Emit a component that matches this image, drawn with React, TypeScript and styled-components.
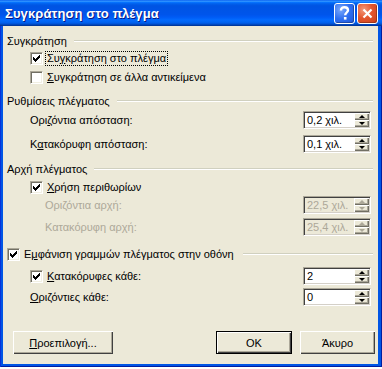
import React from 'react';
import styled, { createGlobalStyle } from 'styled-components';

const Global = createGlobalStyle`
  html, body { margin: 0; padding: 0; background: #ffffff; }
  body { font-family: "Liberation Sans", Arial, sans-serif; }
  #root { width: 382px; }
`;

const Window = styled.div`
  width: 382px;
  height: 367px;
  box-sizing: border-box;
  display: flex;
  flex-direction: column;
  background: #0055e5;
  padding: 0 4px 3px 3px;
  box-shadow: inset 1px 0 0 #0831d9, inset -1px 0 0 #001ea0, inset 0 -1px 0 #001ea0;
`;

const TitleBar = styled.div`
  height: 26px;
  margin: 0 -4px 0 -3px;
  padding: 0 4px 0 5px;
  display: flex;
  align-items: center;
  background: linear-gradient(to bottom, #0058ee 0%, #3593ff 4%, #288eff 6%, #127dff 8%, #036ffc 10%, #0262ee 14%, #0057e5 20%, #0054e3 24%, #0055eb 56%, #005bf5 66%, #026afe 76%, #0062ef 86%, #0052d6 92%, #0040ab 96%, #003092 100%);
`;

const TitleText = styled.div`
  flex: 1;
  color: #ffffff;
  font: bold 13px "Liberation Sans", Arial, sans-serif;
  text-shadow: 1px 1px 0 #0a1883;
  letter-spacing: 0.1px;
`;

const TitleButton = styled.div<{ $kind: 'help' | 'close' }>`
  width: 21px;
  height: 21px;
  box-sizing: border-box;
  margin-left: 2px;
  border: 1px solid #ffffff;
  border-radius: 3px;
  display: flex;
  align-items: center;
  justify-content: center;
  background: ${(p) =>
    p.$kind === 'close'
      ? 'radial-gradient(circle at 30% 30%, #f29a7c 0%, #e4562e 45%, #c8401b 100%)'
      : 'radial-gradient(circle at 30% 30%, #7aa8fb 0%, #2e6ef0 50%, #1f56d6 100%)'};
  box-shadow: inset -1px -1px 0 rgba(0, 0, 0, 0.25);
`;

const Body = styled.div`
  flex: 1;
  background: #ece9d8;
  display: flex;
  flex-direction: column;
  padding: 7px 5px 0 4px;
  font-size: 11px;
  color: #000000;
`;

const GroupHeader = styled.div<{ $mt: number }>`
  height: 16px;
  margin-top: ${(p) => p.$mt}px;
  display: flex;
  align-items: center;
`;

const Rule = styled.div`
  flex: 1;
  margin-left: 7px;
  height: 0;
  border-top: 1px solid #d0d0bf;
  border-bottom: 1px solid #ffffff;
`;

const CheckRow = styled.div<{ $mt: number; $indent: number }>`
  height: 16px;
  margin-top: ${(p) => p.$mt}px;
  padding-left: ${(p) => p.$indent}px;
  display: flex;
  align-items: center;
`;

const Box = styled.div`
  width: 13px;
  height: 13px;
  box-sizing: border-box;
  background: #ffffff;
  border-top: 1px solid #aca899;
  border-left: 1px solid #aca899;
  border-right: 1px solid #ffffff;
  border-bottom: 1px solid #ffffff;
  box-shadow: inset 1px 1px 0 #716f64, inset -1px -1px 0 #f1efe2;
  display: flex;
  align-items: center;
  justify-content: center;
  flex: none;
`;

const Label = styled.span<{ $disabled?: boolean; $focus?: boolean }>`
  color: ${(p) => (p.$disabled ? '#aca899' : '#000000')};
  white-space: nowrap;
  line-height: 13px;
  padding: 0 1px;
  border: 1px ${(p) => (p.$focus ? 'dotted #000000' : 'solid transparent')};
`;

const GroupLabel = styled.span`
  white-space: nowrap;
  line-height: 13px;
`;

const CheckLabel = styled(Label)`
  margin-left: 2px;
`;

const Acc = styled.span`
  text-decoration: underline;
`;

const FieldRow = styled.div<{ $mt: number; $indent: number }>`
  height: 18px;
  margin-top: ${(p) => p.$mt}px;
  padding-left: ${(p) => p.$indent}px;
  padding-right: 2px;
  display: flex;
  align-items: center;
`;

const FieldLabel = styled(Label)`
  flex: 1;
  padding: 0;
  border: none;
`;

const Spin = styled.div<{ $disabled?: boolean }>`
  width: 68px;
  height: 18px;
  box-sizing: border-box;
  display: flex;
  background: ${(p) => (p.$disabled ? '#ece9d8' : '#ffffff')};
  border-top: 1px solid #aca899;
  border-left: 1px solid #aca899;
  border-right: 1px solid #ffffff;
  border-bottom: 1px solid #ffffff;
  box-shadow: inset 1px 1px 0 #404040, inset -1px -1px 0 #d4d0c8;
  padding: 1px;
`;

const SpinValue = styled.div<{ $disabled?: boolean }>`
  flex: 1;
  padding-left: 2px;
  line-height: 14px;
  color: ${(p) => (p.$disabled ? '#aca899' : '#000000')};
  white-space: nowrap;
`;

const SpinButtons = styled.div`
  width: 15px;
  display: flex;
  flex-direction: column;
`;

const SpinBtn = styled.div`
  flex: 1;
  background: #ece9d8;
  box-shadow: inset 1px 1px 0 #ffffff, inset -1px -1px 0 #716f64, inset -2px -2px 0 #aca899;
  display: flex;
  align-items: center;
  justify-content: center;
`;

const Arrow = styled.div<{ $up?: boolean; $disabled?: boolean }>`
  width: 0;
  height: 0;
  border-left: 3px solid transparent;
  border-right: 3px solid transparent;
  ${(p) =>
    p.$up
      ? `border-bottom: 3px solid ${p.$disabled ? '#aca899' : '#000'};`
      : `border-top: 3px solid ${p.$disabled ? '#aca899' : '#000'};`}
`;

const ButtonRow = styled.div`
  margin-top: 25px;
  display: flex;
  align-items: center;
  justify-content: space-between;
  padding-left: 6px;
  margin-right: -2px;
`;

const ButtonGroup = styled.div`
  display: flex;
  align-items: center;
  gap: 8px;
`;

const PushButton = styled.div<{ $w: number; $default?: boolean }>`
  width: ${(p) => p.$w}px;
  flex: none;
  height: 23px;
  box-sizing: border-box;
  display: flex;
  align-items: center;
  justify-content: center;
  background: #ece9d8;
  border: ${(p) => (p.$default ? '1px solid #000000' : 'none')};
  box-shadow: inset 1px 1px 0 #ffffff, inset -1px -1px 0 #404040, inset -2px -2px 0 #aca899;
  white-space: nowrap;
`;

const Check = () => (
  <svg width="7" height="7" viewBox="0 0 7 7" shapeRendering="crispEdges">
    <path
      d="M6 0h1v1H6zM5 1h2v1H5zM0 2h1v1H0zM4 2h3v1H4zM0 3h2v1H0zM3 3h3v1H3zM0 4h5v1H0zM1 5h3v1H1zM2 6h1v1H2z"
      fill="#000"
    />
  </svg>
);

const CheckBox = ({ checked }: { checked: boolean }) => <Box>{checked && <Check />}</Box>;

const SpinBox = ({ value, disabled }: { value: string; disabled?: boolean }) => (
  <Spin $disabled={disabled}>
    <SpinValue $disabled={disabled}>{value}</SpinValue>
    <SpinButtons>
      <SpinBtn>
        <Arrow $up $disabled={disabled} />
      </SpinBtn>
      <SpinBtn>
        <Arrow $disabled={disabled} />
      </SpinBtn>
    </SpinButtons>
  </Spin>
);

export default function App() {
  return (
    <>
      <Global />
      <Window>
        <TitleBar>
          <TitleText>Συγκράτηση στο πλέγμα</TitleText>
          <TitleButton $kind="help">
            <svg width="13" height="15" viewBox="0 0 13 15">
              <path d="M3 4.5 C3 2 4.5 1.2 6.5 1.2 C8.6 1.2 10 2.4 10 4.3 C10 6.3 7.2 6.8 7.2 9.2" stroke="#fff" strokeWidth="2.4" fill="none" />
              <rect x="5.9" y="11" width="2.6" height="2.6" fill="#fff" />
            </svg>
          </TitleButton>
          <TitleButton $kind="close">
            <svg width="11" height="11" viewBox="0 0 11 11">
              <path d="M1.5 1.5 L9.5 9.5 M9.5 1.5 L1.5 9.5" stroke="#fff" strokeWidth="2.2" />
            </svg>
          </TitleButton>
        </TitleBar>
        <Body>
          <GroupHeader $mt={0}>
            <GroupLabel>Συγκράτηση</GroupLabel>
            <Rule />
          </GroupHeader>
          <CheckRow $mt={1} $indent={23}>
            <CheckBox checked />
            <CheckLabel $focus>
              Συ<Acc>γ</Acc>κράτηση στο πλέγμα
            </CheckLabel>
          </CheckRow>
          <CheckRow $mt={3} $indent={23}>
            <CheckBox checked={false} />
            <CheckLabel>
              <Acc>Σ</Acc>υγκράτηση σε άλλα αντικείμενα
            </CheckLabel>
          </CheckRow>

          <GroupHeader $mt={8}>
            <GroupLabel>Ρυθμίσεις πλέγματος</GroupLabel>
            <Rule />
          </GroupHeader>
          <FieldRow $mt={2} $indent={23}>
            <FieldLabel>
              Ορι<Acc>ζ</Acc>όντια απόσταση:
            </FieldLabel>
            <SpinBox value="0,2 χιλ." />
          </FieldRow>
          <FieldRow $mt={6} $indent={23}>
            <FieldLabel>
              Κ<Acc>α</Acc>τακόρυφη απόσταση:
            </FieldLabel>
            <SpinBox value="0,1 χιλ." />
          </FieldRow>

          <GroupHeader $mt={8}>
            <GroupLabel>Αρχή πλέγματος</GroupLabel>
            <Rule />
          </GroupHeader>
          <CheckRow $mt={2} $indent={23}>
            <CheckBox checked />
            <CheckLabel>
              <Acc>Χ</Acc>ρήση περιθωρίων
            </CheckLabel>
          </CheckRow>
          <FieldRow $mt={1} $indent={38}>
            <FieldLabel $disabled>Οριζόντια αρχή:</FieldLabel>
            <SpinBox value="22,5 χιλ." disabled />
          </FieldRow>
          <FieldRow $mt={4} $indent={38}>
            <FieldLabel $disabled>Κατακόρυφη αρχή:</FieldLabel>
            <SpinBox value="25,4 χιλ." disabled />
          </FieldRow>

          <GroupHeader $mt={10}>
            <CheckBox checked />
            <CheckLabel>
              Ε<Acc>μ</Acc>φάνιση γραμμών πλέγματος στην οθόνη
            </CheckLabel>
            <Rule />
          </GroupHeader>
          <FieldRow $mt={5} $indent={23}>
            <CheckBox checked />
            <CheckLabel style={{ flex: 1 }}>
              <Acc>Κ</Acc>ατακόρυφες κάθε:
            </CheckLabel>
            <SpinBox value="2" />
          </FieldRow>
          <FieldRow $mt={3} $indent={23}>
            <FieldLabel>
              <Acc>Ο</Acc>ριζόντιες κάθε:
            </FieldLabel>
            <SpinBox value="0" />
          </FieldRow>

          <ButtonRow>
            <PushButton $w={100}>
              <span>
                <Acc>Π</Acc>ροεπιλογή...
              </span>
            </PushButton>
            <ButtonGroup>
              <PushButton $w={76} $default>
                OK
              </PushButton>
              <PushButton $w={75}>Άκυρο</PushButton>
            </ButtonGroup>
          </ButtonRow>
        </Body>
      </Window>
    </>
  );
}
